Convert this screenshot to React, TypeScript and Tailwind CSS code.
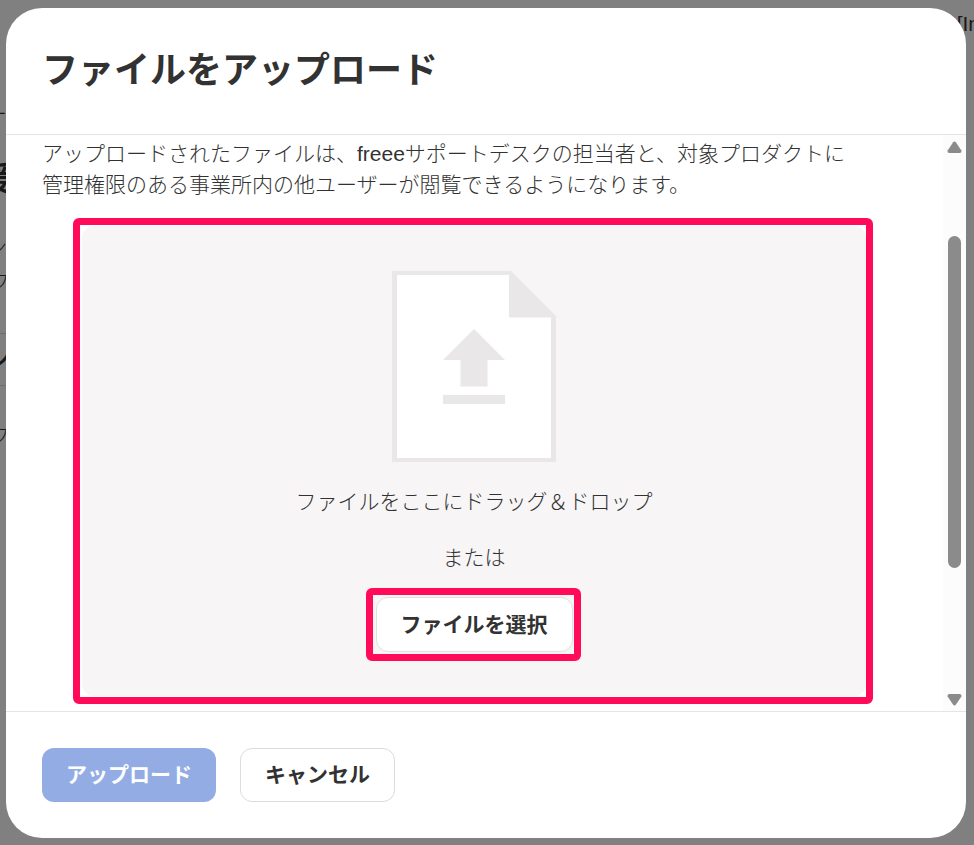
import type { ReactNode } from 'react'

function Highlight({ children, className }: { children: ReactNode; className: string }) {
  return (
    <div className={`rounded-md border-[7px] border-[#ff0b59] ${className}`}>{children}</div>
  )
}

function FileUploadIcon() {
  return (
    <svg width="164" height="191" viewBox="0 0 164 191" aria-hidden="true">
      <path d="M0 0H119L164 45V191H0Z" fill="#e9e7e8" />
      <path d="M5 4H117V46.500H159V187H5Z" fill="#fff" />
      <path d="M82 58L113 89H95.500V115.500H68.500V89H51Z" fill="#e9e7e8" />
      <path d="M51 124H113V133H51Z" fill="#e9e7e8" />
    </svg>
  )
}

function ScrollBar() {
  return (
    <div
      aria-hidden="true"
      className="flex w-[23px] shrink-0 flex-col items-center justify-between bg-[#fcfcfc] pt-[6px] pb-[5px]"
    >
      <svg width="15" height="12" viewBox="0 0 15 12">
        <path d="M6.200 1.200Q7.500 0 8.800 1.200L14.400 9.500Q15 11.500 13 12H2Q0 11.500 .6 9.500Z" fill="#8b8b8b" />
      </svg>
      <div className="flex w-[13px] flex-1 flex-col pt-[83px]">
        <div className="h-[332px] rounded-full bg-[#8b8b8b]" />
      </div>
      <svg width="15" height="12" viewBox="0 0 15 12">
        <path d="M6.200 10.800Q7.500 12 8.800 10.800L14.400 2.500Q15 .5 13 0H2Q0 .5 .6 2.500Z" fill="#8b8b8b" />
      </svg>
    </div>
  )
}

function PageBehind() {
  return (
    <div
      aria-hidden="true"
      className="absolute inset-0 flex justify-between overflow-hidden text-[21px] leading-[31px] font-light text-[#191919]"
    >
      <div className="-ml-[12px] flex w-[22px] flex-col items-end pt-[98px]">
        <span className="pr-[3px]">ー</span>
        <span className="mt-[35px] text-[32px] font-bold">援</span>
        <span className="mt-[36px] pr-[3px]">ン</span>
        <span className="mt-[4px]">フ</span>
        <span className="mt-[36px] w-full border-y border-[#6f6f6f] py-[10px] pr-[3px] text-right font-bold">ン</span>
        <span className="mt-[34px]">フ</span>
      </div>
      <div className="-mr-[6px] pt-[8px]">[In</div>
    </div>
  )
}

export default function App() {
  return (
    <div className="relative h-screen overflow-hidden bg-[#808080] font-['Liberation_Sans','Noto_Sans_CJK_JP',sans-serif] text-[#323232]">
      <PageBehind />
      <div className="relative h-full pt-[8px] pr-[8px] pb-[7px] pl-[6px]">
        <section
          role="dialog"
          aria-modal="true"
          aria-labelledby="upload-title"
          className="flex h-full flex-col overflow-hidden rounded-[36px] bg-white"
        >
          <header className="border-b border-[#e5e5e5] px-[36px] pt-[36px] pb-[36px]">
            <h1 id="upload-title" className="text-[36px] leading-[54px] font-bold">
              ファイルをアップロード
            </h1>
          </header>

          <div className="flex min-h-0 flex-1">
            <div className="min-w-0 flex-1 overflow-hidden px-[36px] pt-[3px] text-[21px] leading-[31px] font-light">
              <p className="max-w-[820px]">
                アップロードされたファイルは、freeeサポートデスクの担当者と、対象プロダクトに管理権限のある事業所内の他ユーザーが閲覧できるようになります。
              </p>
              <Highlight className="mt-[18px] mr-[34px] ml-[31px] pt-[1px] pb-[1px] pl-[2px]">
                <div className="flex flex-col items-center rounded-xl bg-[#f7f5f6] pt-[45px] pb-[35px]">
                  <FileUploadIcon />
                  <p className="mt-[24px]">ファイルをここにドラッグ＆ドロップ</p>
                  <p className="mt-[25px]">または</p>
                  <Highlight className="mt-[15px] mr-[2px] pt-[2px] pr-[1px] pb-[2px] pl-[3px]">
                    <button
                      type="button"
                      className="block h-[55px] rounded-xl border border-[#e1dfe0] bg-white px-[24px] font-bold"
                    >
                      ファイルを選択
                    </button>
                  </Highlight>
                </div>
              </Highlight>
            </div>
            <ScrollBar />
          </div>

          <footer className="flex gap-[24px] border-t border-[#e5e5e5] p-[36px] text-[21px] font-bold">
            <button type="button" disabled className="h-[54px] rounded-xl bg-[#94ace4] px-[24px] text-white">
              アップロード
            </button>
            <button type="button" className="h-[54px] rounded-xl border border-[#dcdcdc] px-[24px]">
              キャンセル
            </button>
          </footer>
        </section>
      </div>
    </div>
  )
}
